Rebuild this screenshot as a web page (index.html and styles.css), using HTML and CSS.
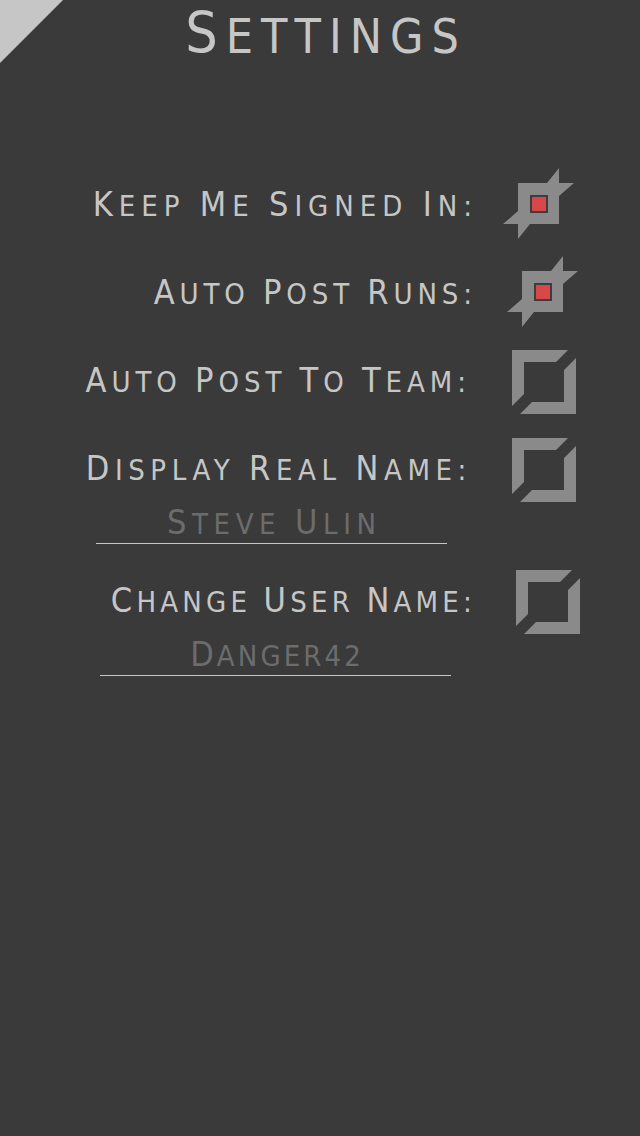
FILE: index.html
```html
<!DOCTYPE html>
<html>
<head>
<meta charset="utf-8">
<title>Settings</title>
<link rel="stylesheet" href="styles.css">
</head>
<body>
<div class="screen">
  <div class="corner"></div>
  <h1 class="title"><span class="cap">S</span>ettings</h1>
  <div class="settings">
    <div class="row row-1">
      <span class="label"><span class="cap">K</span>eep <span class="cap">M</span>e <span class="cap">S</span>igned <span class="cap">I</span>n:</span>
      <svg class="chk-on" viewBox="0 0 72 72" width="72" height="72"><polygon class="fg" points="15,15 44,15 56,0 56,15 71,15 56,28 56,56 27,56 15,71 15,56 0,56 15,43"/><rect class="dot-ring" x="27" y="27" width="18" height="18"/><rect class="dot" x="29" y="29" width="14" height="14"/></svg>
    </div>
    <div class="row row-2">
      <span class="label"><span class="cap">A</span>uto <span class="cap">P</span>ost <span class="cap">R</span>uns:</span>
      <svg class="chk-on" viewBox="0 0 72 72" width="72" height="72"><polygon class="fg" points="15,15 44,15 56,0 56,15 71,15 56,28 56,56 27,56 15,71 15,56 0,56 15,43"/><rect class="dot-ring" x="27" y="27" width="18" height="18"/><rect class="dot" x="29" y="29" width="14" height="14"/></svg>
    </div>
    <div class="row row-3">
      <span class="label"><span class="cap">A</span>uto <span class="cap">P</span>ost <span class="cap">T</span>o <span class="cap">T</span>eam:</span>
      <svg class="chk-off" viewBox="0 0 64 64" width="64" height="64"><polygon class="fg" points="0,0 56,0 44,12 12,12 12,44 0,56"/><polygon class="fg" points="64,8 64,64 8,64 20,52 52,52 52,20"/></svg>
    </div>
    <div class="row row-4">
      <span class="label"><span class="cap">D</span>isplay <span class="cap">R</span>eal <span class="cap">N</span>ame:</span>
      <svg class="chk-off" viewBox="0 0 64 64" width="64" height="64"><polygon class="fg" points="0,0 56,0 44,12 12,12 12,44 0,56"/><polygon class="fg" points="64,8 64,64 8,64 20,52 52,52 52,20"/></svg>
    </div>
    <div class="field field-1"><span class="cap">S</span>teve <span class="cap">U</span>lin</div>
    <div class="row row-5">
      <span class="label"><span class="cap">C</span>hange <span class="cap">U</span>ser <span class="cap">N</span>ame:</span>
      <svg class="chk-off" viewBox="0 0 64 64" width="64" height="64"><polygon class="fg" points="0,0 56,0 44,12 12,12 12,44 0,56"/><polygon class="fg" points="64,8 64,64 8,64 20,52 52,52 52,20"/></svg>
    </div>
    <div class="field field-2"><span class="cap">D</span>anger42</div>
  </div>
</div>
</body>
</html>
```

FILE: styles.css
```css
html, body {
  margin: 0;
  padding: 0;
  background: #3a3a3a;
}
.screen {
  position: relative;
  width: 640px;
  height: 1136px;
  overflow: hidden;
  background: #3a3a3a;
  font-family: "DejaVu Sans Condensed", "Liberation Sans Narrow", "Liberation Sans", sans-serif;
  color: #c6c6c6;
}
.corner {
  position: absolute;
  left: 0;
  top: 0;
  width: 63px;
  height: 63px;
  background: #c6c6c6;
  clip-path: polygon(0 0, 100% 0, 0 100%);
}
.title {
  margin: 0;
  height: 60px;
  padding-top: 4px;
  padding-left: 12px;
  font-weight: normal;
  font-size: 48px;
  line-height: 64px;
  text-transform: uppercase;
  text-align: center;
  letter-spacing: 8px;
  color: #c6c6c6;
}
.title .cap {
  font-size: 57px;
  line-height: 0;
}
.settings {
  display: flex;
  flex-direction: column;
  margin-top: 108px;
}
.row {
  display: flex;
  align-items: center;
  justify-content: flex-end;
  height: 64px;
  margin-top: 24px;
}
.row-1 { margin-top: 0; padding-right: 65px; }
.row-2 { padding-right: 61px; }
.row-3, .row-4 { padding-right: 64px; }
.row-5 { padding-right: 60px; }
.label {
  padding-top: 4px;
  font-size: 29px;
  line-height: 32px;
  text-transform: uppercase;
  letter-spacing: 5.5px;
  white-space: nowrap;
}
.row-1 .label { letter-spacing: 6px; margin-right: 25px; }
.row-2 .label { letter-spacing: 4.9px; margin-right: 30px; }
.row-3 .label { letter-spacing: 4.95px; margin-right: 41px; }
.row-4 .label { letter-spacing: 5.6px; margin-right: 40px; }
.row-5 .label { letter-spacing: 4.2px; margin-right: 40px; }
.label .cap, .field .cap {
  font-size: 34px;
  line-height: 0;
}
.chk-on, .chk-off {
  display: block;
  flex: none;
}
.chk-off { margin-top: 4px; }
.fg { fill: #8a8a8a; }
.dot-ring { fill: #3d3d3d; }
.dot { fill: #d8474a; }
.field {
  align-self: flex-start;
  margin-top: 5px;
  width: 351px;
  height: 32px;
  padding-top: 3px;
  padding-bottom: 3px;
  border-bottom: 1px solid #c6c6c6;
  font-size: 29px;
  line-height: 32px;
  text-transform: uppercase;
  text-align: center;
  color: #6c6c6c;
}
.field-1 {
  margin-left: 96px;
  letter-spacing: 5.6px;
  text-indent: 5.6px;
}
.field-2 {
  margin-left: 100px;
  letter-spacing: 3.1px;
  text-indent: 3.1px;
}
```
